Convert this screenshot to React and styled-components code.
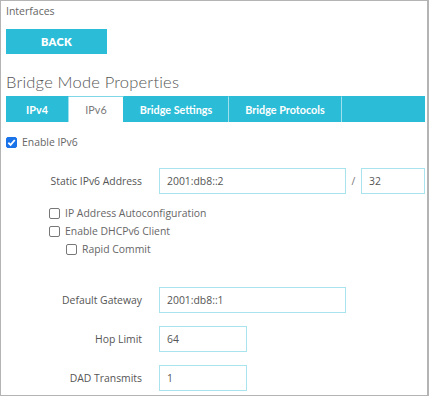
import React, { useState } from 'react';
import styled, { createGlobalStyle } from 'styled-components';

const GlobalStyle = createGlobalStyle`
  html, body {
    margin: 0;
    padding: 0;
    background: #fff;
  }
  body {
    font-family: "Open Sans", "Liberation Sans", sans-serif;
    color: #555;
  }
`;

const Frame = styled.div`
  width: 429px;
  height: 396px;
  box-sizing: border-box;
  border: 1px solid #b4b4b4;
  border-right-width: 2px;
  overflow: hidden;
  padding: 0 0 0 5px;
`;

const Crumb = styled.div`
  font-size: 10.5px;
  color: #666;
  line-height: 14px;
  padding-top: 3px;
`;

const BackButton = styled.button`
  display: block;
  margin-top: 11px;
  width: 101px;
  height: 25px;
  border: none;
  background: #2bbdd8;
  color: #fff;
  font-family: Lato, "Open Sans", sans-serif;
  font-weight: 800;
  font-size: 11px;
  letter-spacing: 0.3px;
  cursor: pointer;
`;

const Heading = styled.h2`
  margin: 18px 0 0;
  font-family: Lato, "Open Sans", sans-serif;
  font-weight: 300;
  font-size: 16.5px;
  letter-spacing: 0.2px;
  line-height: 20px;
  color: #555;
`;

const TabBar = styled.div`
  display: flex;
  margin-top: 4px;
  width: 419px;
  height: 26px;
  background: #2bbdd8;
`;

const Tab = styled.button`
  flex: 0 0 ${(p) => p.$w}px;
  height: 26px;
  border: none;
  border-right: 1px solid ${(p) => (p.$active ? '#2bbdd8' : '#9fe0ec')};
  border-top: 1px solid ${(p) => (p.$active ? '#7fd6e6' : '#2bbdd8')};
  background: ${(p) => (p.$active ? '#fff' : '#2bbdd8')};
  color: ${(p) => (p.$active ? '#7a7a7a' : '#fff')};
  font-family: Lato, "Open Sans", sans-serif;
  font-weight: ${(p) => (p.$active ? 400 : 700)};
  font-size: 10.8px;
  padding: 0;
  cursor: pointer;
  &:last-child {
    border-right: none;
  }
`;

const CheckRow = styled.label`
  display: flex;
  align-items: center;
  gap: 5px;
  font-size: 10.4px;
  color: #666;
  height: 18px;
  margin-left: ${(p) => p.$indent || 0}px;
`;

const Box = styled.span`
  width: 11px;
  height: 11px;
  box-sizing: border-box;
  border: 1px solid ${(p) => (p.$checked ? '#1a73e8' : '#777')};
  border-radius: 2px;
  background: ${(p) => (p.$checked ? '#1a73e8' : '#fff')};
  display: flex;
  align-items: center;
  justify-content: center;
`;

const Section = styled.div`
  margin-top: ${(p) => p.$top || 0}px;
`;

const FieldRow = styled.div`
  display: grid;
  grid-template-columns: 136px auto;
  column-gap: 17px;
  align-items: center;
  height: 26px;
  margin-top: ${(p) => p.$top || 0}px;
`;

const Label = styled.div`
  text-align: right;
  font-size: 10.4px;
  color: #555;
`;

const Inputs = styled.div`
  display: flex;
  align-items: center;
`;

const Input = styled.input`
  width: ${(p) => p.$w}px;
  height: 26px;
  box-sizing: border-box;
  border: 1px solid #a9e3ee;
  padding: 0 7px;
  font-family: "Open Sans", "Liberation Sans", sans-serif;
  font-size: 10.4px;
  color: #555;
  outline: none;
`;

const Slash = styled.span`
  width: 15px;
  text-align: center;
  font-size: 10.4px;
  color: #777;
`;

const Check = ({ checked }) => (
  <Box $checked={checked}>
    {checked && (
      <svg width="9" height="9" viewBox="0 0 8 8">
        <path d="M1.2 4.2 L3.2 6.1 L6.9 1.8" stroke="#fff" strokeWidth="1.6" fill="none" />
      </svg>
    )}
  </Box>
);

const tabs = [
  { name: 'IPv4', w: 63 },
  { name: 'IPv6', w: 55 },
  { name: 'Bridge Settings', w: 105 },
  { name: 'Bridge Protocols', w: 113 },
  { name: '', w: 83 },
];

export default function App() {
  const [active, setActive] = useState('IPv6');

  return (
    <Frame>
      <GlobalStyle />
      <Crumb>Interfaces</Crumb>
      <BackButton>BACK</BackButton>
      <Heading>Bridge Mode Properties</Heading>
      <TabBar>
        {tabs.map((t, i) => (
          <Tab
            key={i}
            $w={t.w}
            $active={t.name === active}
            onClick={() => t.name && setActive(t.name)}
          >
            {t.name}
          </Tab>
        ))}
      </TabBar>

      <Section $top={11}>
        <CheckRow>
          <Check checked />
          Enable IPv6
        </CheckRow>
      </Section>

      <FieldRow $top={17}>
        <Label>Static IPv6 Address</Label>
        <Inputs>
          <Input $w={187} defaultValue="2001:db8::2" />
          <Slash>/</Slash>
          <Input $w={64} defaultValue="32" />
        </Inputs>
      </FieldRow>

      <Section $top={10}>
        <CheckRow $indent={43}>
          <Check />
          IP Address Autoconfiguration
        </CheckRow>
        <CheckRow $indent={43}>
          <Check />
          Enable DHCPv6 Client
        </CheckRow>
        <CheckRow $indent={60}>
          <Check />
          Rapid Commit
        </CheckRow>
      </Section>

      <FieldRow $top={29}>
        <Label>Default Gateway</Label>
        <Inputs>
          <Input $w={187} defaultValue="2001:db8::1" />
        </Inputs>
      </FieldRow>
      <FieldRow $top={13}>
        <Label>Hop Limit</Label>
        <Inputs>
          <Input $w={88} defaultValue="64" />
        </Inputs>
      </FieldRow>
      <FieldRow $top={13}>
        <Label>DAD Transmits</Label>
        <Inputs>
          <Input $w={88} defaultValue="1" />
        </Inputs>
      </FieldRow>
    </Frame>
  );
}
